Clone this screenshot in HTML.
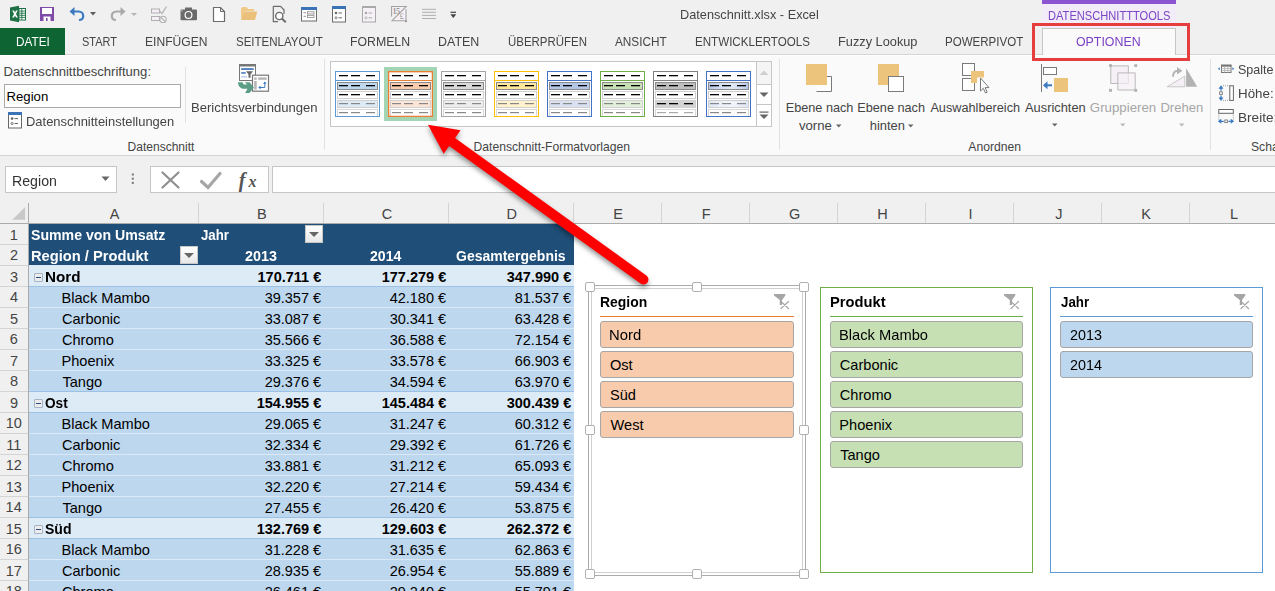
<!DOCTYPE html>
<html><head><meta charset="utf-8"><style>
html,body{margin:0;padding:0;width:1275px;height:591px;overflow:hidden;background:#fff;}
body{position:relative;font-family:"Liberation Sans",sans-serif;}
body>div,body>svg{position:absolute;}
.t{white-space:nowrap;}
</style></head><body>
<div style="left:0px;top:0px;width:1275px;height:55px;background:#f0f0f0"></div>
<div style="left:0px;top:54px;width:1275px;height:1px;background:#d5d5d5"></div>
<div style="left:1042px;top:0px;width:134px;height:4px;background:#8c54d0"></div>
<div style="left:1042px;top:4px;width:134px;height:24px;background:#f1ecf7"></div>
<div class="t" style="left:1047.71px;top:10px;font-size:12.6px;line-height:12.6px;color:#7c44c6;font-weight:normal;transform:scaleX(0.8823);transform-origin:0 0;">DATENSCHNITTTOOLS</div>
<div class="t" style="left:679.98px;top:8px;font-size:13.3px;line-height:13.3px;color:#444;font-weight:normal;transform:scaleX(0.9582);transform-origin:0 0;">Datenschnitt.xlsx - Excel</div>
<div style="left:0px;top:28px;width:65px;height:27px;background:#0f6434"></div>
<div class="t" style="left:15.66px;top:36px;font-size:12.8px;line-height:12.8px;color:#fff;font-weight:normal;transform:scaleX(0.9192);transform-origin:0 0;">DATEI</div>
<div class="t" style="left:81.56px;top:36px;font-size:12.8px;line-height:12.8px;color:#444;font-weight:normal;transform:scaleX(0.8551);transform-origin:0 0;">START</div>
<div class="t" style="left:145.03px;top:36px;font-size:12.8px;line-height:12.8px;color:#444;font-weight:normal;transform:scaleX(0.9441);transform-origin:0 0;">EINFÜGEN</div>
<div class="t" style="left:235.54px;top:36px;font-size:12.8px;line-height:12.8px;color:#444;font-weight:normal;transform:scaleX(0.8985);transform-origin:0 0;">SEITENLAYOUT</div>
<div class="t" style="left:350.42px;top:36px;font-size:12.8px;line-height:12.8px;color:#444;font-weight:normal;transform:scaleX(0.9599);transform-origin:0 0;">FORMELN</div>
<div class="t" style="left:438.30px;top:36px;font-size:12.8px;line-height:12.8px;color:#444;font-weight:normal;transform:scaleX(0.9732);transform-origin:0 0;">DATEN</div>
<div class="t" style="left:507.50px;top:36px;font-size:12.8px;line-height:12.8px;color:#444;font-weight:normal;transform:scaleX(0.8950);transform-origin:0 0;">ÜBERPRÜFEN</div>
<div class="t" style="left:615.00px;top:36px;font-size:12.8px;line-height:12.8px;color:#444;font-weight:normal;transform:scaleX(0.9210);transform-origin:0 0;">ANSICHT</div>
<div class="t" style="left:695.07px;top:36px;font-size:12.8px;line-height:12.8px;color:#444;font-weight:normal;transform:scaleX(0.9063);transform-origin:0 0;">ENTWICKLERTOOLS</div>
<div class="t" style="left:945.48px;top:36px;font-size:12.8px;line-height:12.8px;color:#444;font-weight:normal;transform:scaleX(0.9021);transform-origin:0 0;">POWERPIVOT</div>
<div class="t" style="left:837.98px;top:35px;font-size:13.3px;line-height:13.3px;color:#444;font-weight:normal;transform:scaleX(0.9599);transform-origin:0 0;">Fuzzy Lookup</div>
<div style="left:1042px;top:28px;width:134px;height:27px;background:#fafafa;border:1px solid #c6c6c6;border-bottom:none;box-sizing:border-box"></div>
<div class="t" style="left:1076.01px;top:36px;font-size:12.8px;line-height:12.8px;color:#7a3fc4;font-weight:normal;transform:scaleX(0.9662);transform-origin:0 0;">OPTIONEN</div>
<div style="left:1032px;top:23px;width:158px;height:38px;border:3px solid #e63e3e;box-sizing:border-box;z-index:5"></div>
<div style="left:0px;top:55px;width:1275px;height:100px;background:#fafafa"></div>
<div style="left:0px;top:55px;width:1275px;height:1px;background:#ffffff"></div>
<div style="left:0px;top:155px;width:1275px;height:1px;background:#d5d5d5"></div>
<div style="left:185px;top:67px;width:1px;height:56px;background:#e1e1e1"></div>
<div style="left:324px;top:59px;width:1px;height:91px;background:#e1e1e1"></div>
<div style="left:779px;top:59px;width:1px;height:91px;background:#e1e1e1"></div>
<div style="left:1210px;top:59px;width:1px;height:91px;background:#e1e1e1"></div>
<div class="t" style="left:3.45px;top:65px;font-size:13.09px;line-height:13.09px;color:#444;font-weight:normal;">Datenschnittbeschriftung:</div>
<div style="left:4px;top:84px;width:177px;height:24px;background:#fff;border:1px solid #ababab;box-sizing:border-box"></div>
<div class="t" style="left:6.44px;top:90px;font-size:13.19px;line-height:13.19px;color:#000;font-weight:normal;">Region</div>
<div class="t" style="left:26.26px;top:116px;font-size:12.96px;line-height:12.96px;color:#444;font-weight:normal;transform:scaleX(0.9989);transform-origin:0 0;">Datenschnitteinstellungen</div>
<div class="t" style="left:191.15px;top:101px;font-size:13.11px;line-height:13.11px;color:#444;font-weight:normal;transform:scaleX(0.9982);transform-origin:0 0;">Berichtsverbindungen</div>
<div class="t" style="left:127.54px;top:141px;font-size:12.04px;line-height:12.04px;color:#444;font-weight:normal;">Datenschnitt</div>
<div class="t" style="left:473.52px;top:141px;font-size:12.15px;line-height:12.15px;color:#444;font-weight:normal;">Datenschnitt-Formatvorlagen</div>
<div class="t" style="left:968.29px;top:141px;font-size:12.15px;line-height:12.15px;color:#444;font-weight:normal;">Anordnen</div>
<div class="t" style="left:1251.01px;top:141px;font-size:12.15px;line-height:12.15px;color:#444;font-weight:normal;">Scha</div>
<div class="t" style="left:785.68px;top:102px;font-size:12.69px;line-height:12.69px;color:#444;font-weight:normal;">Ebene nach</div>
<div class="t" style="left:798.95px;top:119px;font-size:13.18px;line-height:13.18px;color:#444;font-weight:normal;">vorne</div>
<div class="t" style="left:857.28px;top:102px;font-size:12.69px;line-height:12.69px;color:#444;font-weight:normal;">Ebene nach</div>
<div class="t" style="left:869.77px;top:120px;font-size:12.92px;line-height:12.92px;color:#444;font-weight:normal;">hinten</div>
<div class="t" style="left:930.39px;top:102px;font-size:12.71px;line-height:12.71px;color:#444;font-weight:normal;">Auswahlbereich</div>
<div class="t" style="left:1025.01px;top:102px;font-size:12.85px;line-height:12.85px;color:#444;font-weight:normal;">Ausrichten</div>
<div class="t" style="left:1089.85px;top:101px;font-size:13.27px;line-height:13.27px;color:#a6a6a6;font-weight:normal;">Gruppieren</div>
<div class="t" style="left:1160.46px;top:101px;font-size:13.04px;line-height:13.04px;color:#a6a6a6;font-weight:normal;">Drehen</div>
<div class="t" style="left:1237.80px;top:63px;font-size:13.2px;line-height:13.2px;color:#444;font-weight:normal;transform:scaleX(0.9500);transform-origin:0 0;">Spalte</div>
<div class="t" style="left:1237.93px;top:87px;font-size:13.2px;line-height:13.2px;color:#444;font-weight:normal;transform:scaleX(1.0119);transform-origin:0 0;">Höhe:</div>
<div class="t" style="left:1237.91px;top:111px;font-size:13.2px;line-height:13.2px;color:#444;font-weight:normal;transform:scaleX(1.0297);transform-origin:0 0;">Breite:</div>
<div style="left:0px;top:156px;width:1275px;height:47px;background:#f0f0f0"></div>
<div style="left:5px;top:166px;width:112px;height:27px;background:#fff;border:1px solid #c6c6c6;box-sizing:border-box"></div>
<div class="t" style="left:11.57px;top:174px;font-size:14.2px;line-height:14.2px;color:#333;font-weight:normal;transform:scaleX(0.9985);transform-origin:0 0;">Region</div>
<div style="left:150px;top:166px;width:119px;height:27px;background:#fff;border:1px solid #c6c6c6;box-sizing:border-box"></div>
<div style="left:272px;top:166px;width:1010px;height:27px;background:#fff;border:1px solid #c6c6c6;box-sizing:border-box"></div>
<div style="left:0px;top:203px;width:1275px;height:21px;background:#f0f0f0"></div>
<div style="left:0px;top:223px;width:1275px;height:1px;background:#ababab"></div>
<div style="left:198px;top:203px;width:1px;height:20px;background:#d4d4d4"></div>
<div class="t" style="left:109.64px;top:207px;font-size:14.5px;line-height:14.5px;color:#444;font-weight:normal;">A</div>
<div style="left:323px;top:203px;width:1px;height:20px;background:#d4d4d4"></div>
<div class="t" style="left:256.93px;top:207px;font-size:14.5px;line-height:14.5px;color:#444;font-weight:normal;">B</div>
<div style="left:448px;top:203px;width:1px;height:20px;background:#d4d4d4"></div>
<div class="t" style="left:381.63px;top:207px;font-size:14.5px;line-height:14.5px;color:#444;font-weight:normal;">C</div>
<div style="left:573px;top:203px;width:1px;height:20px;background:#d4d4d4"></div>
<div class="t" style="left:506.49px;top:207px;font-size:14.5px;line-height:14.5px;color:#444;font-weight:normal;">D</div>
<div style="left:661px;top:203px;width:1px;height:20px;background:#d4d4d4"></div>
<div class="t" style="left:613.35px;top:207px;font-size:14.5px;line-height:14.5px;color:#444;font-weight:normal;">E</div>
<div style="left:749px;top:203px;width:1px;height:20px;background:#d4d4d4"></div>
<div class="t" style="left:701.72px;top:207px;font-size:14.5px;line-height:14.5px;color:#444;font-weight:normal;">F</div>
<div style="left:837px;top:203px;width:1px;height:20px;background:#d4d4d4"></div>
<div class="t" style="left:788.99px;top:207px;font-size:14.5px;line-height:14.5px;color:#444;font-weight:normal;">G</div>
<div style="left:925px;top:203px;width:1px;height:20px;background:#d4d4d4"></div>
<div class="t" style="left:877.21px;top:207px;font-size:14.5px;line-height:14.5px;color:#444;font-weight:normal;">H</div>
<div style="left:1013px;top:203px;width:1px;height:20px;background:#d4d4d4"></div>
<div class="t" style="left:968.47px;top:207px;font-size:14.5px;line-height:14.5px;color:#444;font-weight:normal;">I</div>
<div style="left:1101px;top:203px;width:1px;height:20px;background:#d4d4d4"></div>
<div class="t" style="left:1055.31px;top:207px;font-size:14.5px;line-height:14.5px;color:#444;font-weight:normal;">J</div>
<div style="left:1189px;top:203px;width:1px;height:20px;background:#d4d4d4"></div>
<div class="t" style="left:1141.13px;top:207px;font-size:14.5px;line-height:14.5px;color:#444;font-weight:normal;">K</div>
<div style="left:1277px;top:203px;width:1px;height:20px;background:#d4d4d4"></div>
<div class="t" style="left:1230.08px;top:207px;font-size:14.5px;line-height:14.5px;color:#444;font-weight:normal;">L</div>
<svg style="left:12px;top:207px;" width="14" height="13" viewBox="0 0 14 13"><path d="M0.4 12.8H13.1V0.1Z" fill="#c8c8c8"/></svg>
<div style="left:29px;top:224px;width:1246px;height:367px;background:#fff"></div>
<div style="left:0px;top:224px;width:28px;height:367px;background:#f0f0f0"></div>
<div style="left:28px;top:203px;width:1px;height:388px;background:#ababab"></div>
<div style="left:0px;top:244px;width:28px;height:1px;background:#d4d4d4"></div>
<div class="t" style="left:9.79px;top:228px;font-size:14.5px;line-height:14.5px;color:#444;font-weight:normal;">1</div>
<div style="left:0px;top:265px;width:28px;height:1px;background:#d4d4d4"></div>
<div class="t" style="left:9.94px;top:248px;font-size:14.5px;line-height:14.5px;color:#444;font-weight:normal;">2</div>
<div style="left:0px;top:286px;width:28px;height:1px;background:#d4d4d4"></div>
<div class="t" style="left:10.01px;top:270px;font-size:14.5px;line-height:14.5px;color:#444;font-weight:normal;">3</div>
<div style="left:0px;top:307px;width:28px;height:1px;background:#d4d4d4"></div>
<div class="t" style="left:10.01px;top:290px;font-size:14.5px;line-height:14.5px;color:#444;font-weight:normal;">4</div>
<div style="left:0px;top:328px;width:28px;height:1px;background:#d4d4d4"></div>
<div class="t" style="left:9.94px;top:312px;font-size:14.5px;line-height:14.5px;color:#444;font-weight:normal;">5</div>
<div style="left:0px;top:349px;width:28px;height:1px;background:#d4d4d4"></div>
<div class="t" style="left:9.87px;top:332px;font-size:14.5px;line-height:14.5px;color:#444;font-weight:normal;">6</div>
<div style="left:0px;top:370px;width:28px;height:1px;background:#d4d4d4"></div>
<div class="t" style="left:9.94px;top:354px;font-size:14.5px;line-height:14.5px;color:#444;font-weight:normal;">7</div>
<div style="left:0px;top:391px;width:28px;height:1px;background:#d4d4d4"></div>
<div class="t" style="left:9.94px;top:374px;font-size:14.5px;line-height:14.5px;color:#444;font-weight:normal;">8</div>
<div style="left:0px;top:412px;width:28px;height:1px;background:#d4d4d4"></div>
<div class="t" style="left:10.01px;top:396px;font-size:14.5px;line-height:14.5px;color:#444;font-weight:normal;">9</div>
<div style="left:0px;top:433px;width:28px;height:1px;background:#d4d4d4"></div>
<div class="t" style="left:5.69px;top:416px;font-size:14.5px;line-height:14.5px;color:#444;font-weight:normal;">10</div>
<div style="left:0px;top:454px;width:28px;height:1px;background:#d4d4d4"></div>
<div class="t" style="left:6.30px;top:438px;font-size:14.5px;line-height:14.5px;color:#444;font-weight:normal;">11</div>
<div style="left:0px;top:475px;width:28px;height:1px;background:#d4d4d4"></div>
<div class="t" style="left:5.76px;top:458px;font-size:14.5px;line-height:14.5px;color:#444;font-weight:normal;">12</div>
<div style="left:0px;top:496px;width:28px;height:1px;background:#d4d4d4"></div>
<div class="t" style="left:5.69px;top:480px;font-size:14.5px;line-height:14.5px;color:#444;font-weight:normal;">13</div>
<div style="left:0px;top:517px;width:28px;height:1px;background:#d4d4d4"></div>
<div class="t" style="left:5.62px;top:500px;font-size:14.5px;line-height:14.5px;color:#444;font-weight:normal;">14</div>
<div style="left:0px;top:538px;width:28px;height:1px;background:#d4d4d4"></div>
<div class="t" style="left:5.69px;top:522px;font-size:14.5px;line-height:14.5px;color:#444;font-weight:normal;">15</div>
<div style="left:0px;top:559px;width:28px;height:1px;background:#d4d4d4"></div>
<div class="t" style="left:5.69px;top:542px;font-size:14.5px;line-height:14.5px;color:#444;font-weight:normal;">16</div>
<div style="left:0px;top:580px;width:28px;height:1px;background:#d4d4d4"></div>
<div class="t" style="left:5.76px;top:564px;font-size:14.5px;line-height:14.5px;color:#444;font-weight:normal;">17</div>
<div class="t" style="left:5.69px;top:584px;font-size:14.5px;line-height:14.5px;color:#444;font-weight:normal;">18</div>
<div style="left:29px;top:224px;width:545px;height:41px;background:#1f4e78"></div>
<div style="left:29px;top:265px;width:545px;height:21px;background:#ddebf7"></div>
<div style="left:29px;top:265px;width:545px;height:1px;background:#dbe8f5"></div>
<div style="left:34px;top:273px;width:9px;height:9px;background:#ececec;border:1px solid #a5b3c7;box-sizing:border-box;border-radius:1px"></div>
<div style="left:36px;top:277px;width:5px;height:1px;background:#2b4a80"></div>
<div class="t" style="left:44.59px;top:270px;font-size:14.13px;line-height:14.13px;color:#000;font-weight:bold;transform:scaleX(1.0781);transform-origin:0 0;">Nord</div>
<div class="t" style="left:257.53px;top:270px;font-size:14.5px;line-height:14.5px;color:#000;font-weight:bold;">170.711 €</div>
<div class="t" style="left:381.73px;top:270px;font-size:14.5px;line-height:14.5px;color:#000;font-weight:bold;">177.279 €</div>
<div class="t" style="left:506.73px;top:270px;font-size:14.5px;line-height:14.5px;color:#000;font-weight:bold;">347.990 €</div>
<div style="left:29px;top:286px;width:545px;height:21px;background:#bdd7ee"></div>
<div style="left:29px;top:286px;width:545px;height:1px;background:#9bc2e6"></div>
<div class="t" style="left:61.53px;top:291px;font-size:14.6px;line-height:14.6px;color:#000;font-weight:normal;">Black Mambo</div>
<div class="t" style="left:264.65px;top:291px;font-size:14.5px;line-height:14.5px;color:#000;font-weight:normal;">39.357 €</div>
<div class="t" style="left:389.65px;top:291px;font-size:14.5px;line-height:14.5px;color:#000;font-weight:normal;">42.180 €</div>
<div class="t" style="left:514.65px;top:291px;font-size:14.5px;line-height:14.5px;color:#000;font-weight:normal;">81.537 €</div>
<div style="left:29px;top:307px;width:545px;height:21px;background:#bdd7ee"></div>
<div style="left:29px;top:307px;width:545px;height:1px;background:#dbe8f5"></div>
<div class="t" style="left:61.97px;top:312px;font-size:14.6px;line-height:14.6px;color:#000;font-weight:normal;">Carbonic</div>
<div class="t" style="left:264.65px;top:312px;font-size:14.5px;line-height:14.5px;color:#000;font-weight:normal;">33.087 €</div>
<div class="t" style="left:389.65px;top:312px;font-size:14.5px;line-height:14.5px;color:#000;font-weight:normal;">30.341 €</div>
<div class="t" style="left:514.65px;top:312px;font-size:14.5px;line-height:14.5px;color:#000;font-weight:normal;">63.428 €</div>
<div style="left:29px;top:328px;width:545px;height:21px;background:#bdd7ee"></div>
<div style="left:29px;top:328px;width:545px;height:1px;background:#dbe8f5"></div>
<div class="t" style="left:61.97px;top:333px;font-size:14.6px;line-height:14.6px;color:#000;font-weight:normal;">Chromo</div>
<div class="t" style="left:264.65px;top:333px;font-size:14.5px;line-height:14.5px;color:#000;font-weight:normal;">35.566 €</div>
<div class="t" style="left:389.65px;top:333px;font-size:14.5px;line-height:14.5px;color:#000;font-weight:normal;">36.588 €</div>
<div class="t" style="left:514.65px;top:333px;font-size:14.5px;line-height:14.5px;color:#000;font-weight:normal;">72.154 €</div>
<div style="left:29px;top:349px;width:545px;height:21px;background:#bdd7ee"></div>
<div style="left:29px;top:349px;width:545px;height:1px;background:#dbe8f5"></div>
<div class="t" style="left:61.53px;top:354px;font-size:14.6px;line-height:14.6px;color:#000;font-weight:normal;">Phoenix</div>
<div class="t" style="left:264.65px;top:354px;font-size:14.5px;line-height:14.5px;color:#000;font-weight:normal;">33.325 €</div>
<div class="t" style="left:389.65px;top:354px;font-size:14.5px;line-height:14.5px;color:#000;font-weight:normal;">33.578 €</div>
<div class="t" style="left:514.65px;top:354px;font-size:14.5px;line-height:14.5px;color:#000;font-weight:normal;">66.903 €</div>
<div style="left:29px;top:370px;width:545px;height:21px;background:#bdd7ee"></div>
<div style="left:29px;top:370px;width:545px;height:1px;background:#dbe8f5"></div>
<div class="t" style="left:62.41px;top:375px;font-size:14.6px;line-height:14.6px;color:#000;font-weight:normal;">Tango</div>
<div class="t" style="left:264.65px;top:375px;font-size:14.5px;line-height:14.5px;color:#000;font-weight:normal;">29.376 €</div>
<div class="t" style="left:389.65px;top:375px;font-size:14.5px;line-height:14.5px;color:#000;font-weight:normal;">34.594 €</div>
<div class="t" style="left:514.65px;top:375px;font-size:14.5px;line-height:14.5px;color:#000;font-weight:normal;">63.970 €</div>
<div style="left:29px;top:391px;width:545px;height:21px;background:#ddebf7"></div>
<div style="left:29px;top:391px;width:545px;height:1px;background:#9bc2e6"></div>
<div style="left:34px;top:399px;width:9px;height:9px;background:#ececec;border:1px solid #a5b3c7;box-sizing:border-box;border-radius:1px"></div>
<div style="left:36px;top:403px;width:5px;height:1px;background:#2b4a80"></div>
<div class="t" style="left:44.96px;top:396px;font-size:14.13px;line-height:14.13px;color:#000;font-weight:bold;transform:scaleX(0.9631);transform-origin:0 0;">Ost</div>
<div class="t" style="left:256.73px;top:396px;font-size:14.5px;line-height:14.5px;color:#000;font-weight:bold;">154.955 €</div>
<div class="t" style="left:381.73px;top:396px;font-size:14.5px;line-height:14.5px;color:#000;font-weight:bold;">145.484 €</div>
<div class="t" style="left:506.73px;top:396px;font-size:14.5px;line-height:14.5px;color:#000;font-weight:bold;">300.439 €</div>
<div style="left:29px;top:412px;width:545px;height:21px;background:#bdd7ee"></div>
<div style="left:29px;top:412px;width:545px;height:1px;background:#9bc2e6"></div>
<div class="t" style="left:61.53px;top:417px;font-size:14.6px;line-height:14.6px;color:#000;font-weight:normal;">Black Mambo</div>
<div class="t" style="left:264.65px;top:417px;font-size:14.5px;line-height:14.5px;color:#000;font-weight:normal;">29.065 €</div>
<div class="t" style="left:389.65px;top:417px;font-size:14.5px;line-height:14.5px;color:#000;font-weight:normal;">31.247 €</div>
<div class="t" style="left:514.65px;top:417px;font-size:14.5px;line-height:14.5px;color:#000;font-weight:normal;">60.312 €</div>
<div style="left:29px;top:433px;width:545px;height:21px;background:#bdd7ee"></div>
<div style="left:29px;top:433px;width:545px;height:1px;background:#dbe8f5"></div>
<div class="t" style="left:61.97px;top:438px;font-size:14.6px;line-height:14.6px;color:#000;font-weight:normal;">Carbonic</div>
<div class="t" style="left:264.65px;top:438px;font-size:14.5px;line-height:14.5px;color:#000;font-weight:normal;">32.334 €</div>
<div class="t" style="left:389.65px;top:438px;font-size:14.5px;line-height:14.5px;color:#000;font-weight:normal;">29.392 €</div>
<div class="t" style="left:514.65px;top:438px;font-size:14.5px;line-height:14.5px;color:#000;font-weight:normal;">61.726 €</div>
<div style="left:29px;top:454px;width:545px;height:21px;background:#bdd7ee"></div>
<div style="left:29px;top:454px;width:545px;height:1px;background:#dbe8f5"></div>
<div class="t" style="left:61.97px;top:459px;font-size:14.6px;line-height:14.6px;color:#000;font-weight:normal;">Chromo</div>
<div class="t" style="left:264.65px;top:459px;font-size:14.5px;line-height:14.5px;color:#000;font-weight:normal;">33.881 €</div>
<div class="t" style="left:389.65px;top:459px;font-size:14.5px;line-height:14.5px;color:#000;font-weight:normal;">31.212 €</div>
<div class="t" style="left:514.65px;top:459px;font-size:14.5px;line-height:14.5px;color:#000;font-weight:normal;">65.093 €</div>
<div style="left:29px;top:475px;width:545px;height:21px;background:#bdd7ee"></div>
<div style="left:29px;top:475px;width:545px;height:1px;background:#dbe8f5"></div>
<div class="t" style="left:61.53px;top:480px;font-size:14.6px;line-height:14.6px;color:#000;font-weight:normal;">Phoenix</div>
<div class="t" style="left:264.65px;top:480px;font-size:14.5px;line-height:14.5px;color:#000;font-weight:normal;">32.220 €</div>
<div class="t" style="left:389.65px;top:480px;font-size:14.5px;line-height:14.5px;color:#000;font-weight:normal;">27.214 €</div>
<div class="t" style="left:514.65px;top:480px;font-size:14.5px;line-height:14.5px;color:#000;font-weight:normal;">59.434 €</div>
<div style="left:29px;top:496px;width:545px;height:21px;background:#bdd7ee"></div>
<div style="left:29px;top:496px;width:545px;height:1px;background:#dbe8f5"></div>
<div class="t" style="left:62.41px;top:501px;font-size:14.6px;line-height:14.6px;color:#000;font-weight:normal;">Tango</div>
<div class="t" style="left:264.65px;top:501px;font-size:14.5px;line-height:14.5px;color:#000;font-weight:normal;">27.455 €</div>
<div class="t" style="left:389.65px;top:501px;font-size:14.5px;line-height:14.5px;color:#000;font-weight:normal;">26.420 €</div>
<div class="t" style="left:514.65px;top:501px;font-size:14.5px;line-height:14.5px;color:#000;font-weight:normal;">53.875 €</div>
<div style="left:29px;top:517px;width:545px;height:21px;background:#ddebf7"></div>
<div style="left:29px;top:517px;width:545px;height:1px;background:#9bc2e6"></div>
<div style="left:34px;top:525px;width:9px;height:9px;background:#ececec;border:1px solid #a5b3c7;box-sizing:border-box;border-radius:1px"></div>
<div style="left:36px;top:529px;width:5px;height:1px;background:#2b4a80"></div>
<div class="t" style="left:45.22px;top:522px;font-size:14.13px;line-height:14.13px;color:#000;font-weight:bold;transform:scaleX(0.9943);transform-origin:0 0;">Süd</div>
<div class="t" style="left:256.73px;top:522px;font-size:14.5px;line-height:14.5px;color:#000;font-weight:bold;">132.769 €</div>
<div class="t" style="left:381.73px;top:522px;font-size:14.5px;line-height:14.5px;color:#000;font-weight:bold;">129.603 €</div>
<div class="t" style="left:506.73px;top:522px;font-size:14.5px;line-height:14.5px;color:#000;font-weight:bold;">262.372 €</div>
<div style="left:29px;top:538px;width:545px;height:21px;background:#bdd7ee"></div>
<div style="left:29px;top:538px;width:545px;height:1px;background:#9bc2e6"></div>
<div class="t" style="left:61.53px;top:543px;font-size:14.6px;line-height:14.6px;color:#000;font-weight:normal;">Black Mambo</div>
<div class="t" style="left:264.65px;top:543px;font-size:14.5px;line-height:14.5px;color:#000;font-weight:normal;">31.228 €</div>
<div class="t" style="left:389.65px;top:543px;font-size:14.5px;line-height:14.5px;color:#000;font-weight:normal;">31.635 €</div>
<div class="t" style="left:514.65px;top:543px;font-size:14.5px;line-height:14.5px;color:#000;font-weight:normal;">62.863 €</div>
<div style="left:29px;top:559px;width:545px;height:21px;background:#bdd7ee"></div>
<div style="left:29px;top:559px;width:545px;height:1px;background:#dbe8f5"></div>
<div class="t" style="left:61.97px;top:564px;font-size:14.6px;line-height:14.6px;color:#000;font-weight:normal;">Carbonic</div>
<div class="t" style="left:264.65px;top:564px;font-size:14.5px;line-height:14.5px;color:#000;font-weight:normal;">28.935 €</div>
<div class="t" style="left:389.65px;top:564px;font-size:14.5px;line-height:14.5px;color:#000;font-weight:normal;">26.954 €</div>
<div class="t" style="left:514.65px;top:564px;font-size:14.5px;line-height:14.5px;color:#000;font-weight:normal;">55.889 €</div>
<div style="left:29px;top:580px;width:545px;height:21px;background:#bdd7ee"></div>
<div style="left:29px;top:580px;width:545px;height:1px;background:#dbe8f5"></div>
<div class="t" style="left:61.97px;top:585px;font-size:14.6px;line-height:14.6px;color:#000;font-weight:normal;">Chromo</div>
<div class="t" style="left:264.65px;top:585px;font-size:14.5px;line-height:14.5px;color:#000;font-weight:normal;">26.461 €</div>
<div class="t" style="left:389.65px;top:585px;font-size:14.5px;line-height:14.5px;color:#000;font-weight:normal;">29.240 €</div>
<div class="t" style="left:514.65px;top:585px;font-size:14.5px;line-height:14.5px;color:#000;font-weight:normal;">55.791 €</div>
<div class="t" style="left:31.12px;top:228px;font-size:14.13px;line-height:14.13px;color:#fff;font-weight:bold;transform:scaleX(1.0003);transform-origin:0 0;">Summe von Umsatz</div>
<div class="t" style="left:200.57px;top:228px;font-size:14.13px;line-height:14.13px;color:#fff;font-weight:bold;transform:scaleX(0.9366);transform-origin:0 0;">Jahr</div>
<div class="t" style="left:30.52px;top:249px;font-size:14.13px;line-height:14.13px;color:#fff;font-weight:bold;transform:scaleX(1.0397);transform-origin:0 0;">Region / Produkt</div>
<div class="t" style="left:245.27px;top:249px;font-size:14.13px;line-height:14.13px;color:#fff;font-weight:bold;transform:scaleX(1.0164);transform-origin:0 0;">2013</div>
<div class="t" style="left:370.28px;top:249px;font-size:14.13px;line-height:14.13px;color:#fff;font-weight:bold;transform:scaleX(0.9979);transform-origin:0 0;">2014</div>
<div class="t" style="left:456.44px;top:249px;font-size:14.13px;line-height:14.13px;color:#fff;font-weight:bold;transform:scaleX(0.9904);transform-origin:0 0;">Gesamtergebnis</div>
<div style="left:305px;top:225px;width:18px;height:18px;background:linear-gradient(#ffffff,#e8e8e8);border:1px solid #c8c8c8;box-sizing:border-box"></div>
<svg style="left:309px;top:232px;" width="10" height="5" viewBox="0 0 10 5"><path d="M0 0H10L5 5Z" fill="#666"/></svg>
<div style="left:180px;top:246px;width:18px;height:18px;background:linear-gradient(#ffffff,#e8e8e8);border:1px solid #c8c8c8;box-sizing:border-box"></div>
<svg style="left:184px;top:253px;" width="10" height="5" viewBox="0 0 10 5"><path d="M0 0H10L5 5Z" fill="#666"/></svg>
<div class="t" style="left:599.86px;top:295px;font-size:14.0px;line-height:14.0px;color:#000;font-weight:bold;transform:scaleX(0.9945);transform-origin:0 0;">Region</div>
<div style="left:600px;top:316px;width:194px;height:1px;background:#ed7d31"></div>
<div style="left:600px;top:321px;width:194px;height:27px;background:#f8cbad;border:1px solid #a6a6a6;border-radius:3px;box-sizing:border-box"></div>
<div class="t" style="left:609.31px;top:328px;font-size:14.6px;line-height:14.6px;color:#000;font-weight:normal;transform:scaleX(1.0183);transform-origin:0 0;">Nord</div>
<div style="left:600px;top:351px;width:194px;height:27px;background:#f8cbad;border:1px solid #a6a6a6;border-radius:3px;box-sizing:border-box"></div>
<div class="t" style="left:609.92px;top:358px;font-size:14.6px;line-height:14.6px;color:#000;font-weight:normal;">Ost</div>
<div style="left:600px;top:381px;width:194px;height:27px;background:#f8cbad;border:1px solid #a6a6a6;border-radius:3px;box-sizing:border-box"></div>
<div class="t" style="left:609.92px;top:388px;font-size:14.6px;line-height:14.6px;color:#000;font-weight:normal;">Süd</div>
<div style="left:600px;top:411px;width:194px;height:27px;background:#f8cbad;border:1px solid #a6a6a6;border-radius:3px;box-sizing:border-box"></div>
<div class="t" style="left:610.50px;top:418px;font-size:14.6px;line-height:14.6px;color:#000;font-weight:normal;">West</div>
<div style="left:820px;top:287px;width:213px;height:286px;border:1px solid #70ad47;box-sizing:border-box;background:#fff"></div>
<div class="t" style="left:829.82px;top:295px;font-size:14.0px;line-height:14.0px;color:#000;font-weight:bold;transform:scaleX(1.0498);transform-origin:0 0;">Produkt</div>
<div style="left:830px;top:316px;width:193px;height:1px;background:#70ad47"></div>
<div style="left:830px;top:321px;width:193px;height:27px;background:#c6e0b4;border:1px solid #a6a6a6;border-radius:3px;box-sizing:border-box"></div>
<div class="t" style="left:839.32px;top:328px;font-size:14.6px;line-height:14.6px;color:#000;font-weight:normal;transform:scaleX(1.0064);transform-origin:0 0;">Black Mambo</div>
<div style="left:830px;top:351px;width:193px;height:27px;background:#c6e0b4;border:1px solid #a6a6a6;border-radius:3px;box-sizing:border-box"></div>
<div class="t" style="left:839.77px;top:358px;font-size:14.6px;line-height:14.6px;color:#000;font-weight:normal;">Carbonic</div>
<div style="left:830px;top:381px;width:193px;height:27px;background:#c6e0b4;border:1px solid #a6a6a6;border-radius:3px;box-sizing:border-box"></div>
<div class="t" style="left:839.77px;top:388px;font-size:14.6px;line-height:14.6px;color:#000;font-weight:normal;">Chromo</div>
<div style="left:830px;top:411px;width:193px;height:27px;background:#c6e0b4;border:1px solid #a6a6a6;border-radius:3px;box-sizing:border-box"></div>
<div class="t" style="left:839.33px;top:418px;font-size:14.6px;line-height:14.6px;color:#000;font-weight:normal;">Phoenix</div>
<div style="left:830px;top:441px;width:193px;height:27px;background:#c6e0b4;border:1px solid #a6a6a6;border-radius:3px;box-sizing:border-box"></div>
<div class="t" style="left:840.21px;top:448px;font-size:14.6px;line-height:14.6px;color:#000;font-weight:normal;">Tango</div>
<div style="left:1050px;top:287px;width:213px;height:286px;border:1px solid #5b9bd5;box-sizing:border-box;background:#fff"></div>
<div class="t" style="left:1060.57px;top:295px;font-size:14.0px;line-height:14.0px;color:#000;font-weight:bold;transform:scaleX(0.9487);transform-origin:0 0;">Jahr</div>
<div style="left:1060px;top:316px;width:193px;height:1px;background:#5b9bd5"></div>
<div style="left:1060px;top:321px;width:193px;height:27px;background:#bdd7ee;border:1px solid #a6a6a6;border-radius:3px;box-sizing:border-box"></div>
<div class="t" style="left:1069.78px;top:328px;font-size:14.6px;line-height:14.6px;color:#000;font-weight:normal;transform:scaleX(0.9833);transform-origin:0 0;">2013</div>
<div style="left:1060px;top:351px;width:193px;height:27px;background:#bdd7ee;border:1px solid #a6a6a6;border-radius:3px;box-sizing:border-box"></div>
<div class="t" style="left:1069.78px;top:358px;font-size:14.6px;line-height:14.6px;color:#000;font-weight:normal;transform:scaleX(0.9851);transform-origin:0 0;">2014</div>
<svg style="left:9px;top:5px;" width="18" height="18" viewBox="0 0 18 18"><path d="M1 2.5L10 0.7V17.3L1 15.5Z" fill="#1e7145"/><rect x="9.5" y="3" width="7.5" height="12.5" fill="#1e7145"/><rect x="10.5" y="4" width="5.5" height="10.5" fill="#fff"/><path d="M10.5 6.1H16M10.5 8.2H16M10.5 10.3H16M10.5 12.4H16M12.8 4V14.5" stroke="#1e7145" stroke-width="0.9"/><path d="M3.2 5.4H5.1L6 7.4L7 5.4H8.8L7 8.9L8.9 12.6H7L6 10.5L5 12.6H3.1L5 8.9Z" fill="#fff"/></svg>
<svg style="left:39px;top:6px;" width="16" height="16" viewBox="0 0 16 16"><rect x="1" y="1" width="14" height="14" fill="#7e4ba9"/><rect x="3" y="2" width="10" height="6" fill="#fff"/><rect x="4.5" y="10.5" width="7" height="4.5" fill="#fff"/><rect x="7" y="12" width="1.6" height="3" fill="#7e4ba9"/></svg>
<svg style="left:68px;top:5px;" width="18" height="17" viewBox="0 0 18 17"><path d="M4.5 6.5H10.5C13.5 6.5 15.2 8.6 15.2 11C15.2 13.4 13.4 15 11 15" stroke="#3e7ac1" stroke-width="2.2" fill="none"/><path d="M1.5 6.5L6.5 2V11Z" fill="#3e7ac1"/></svg>
<svg style="left:90px;top:12px;" width="7" height="4" viewBox="0 0 7 4"><path d="M0 0H6L3 3.5Z" fill="#5e5e5e"/></svg>
<svg style="left:109px;top:5px;" width="18" height="17" viewBox="0 0 18 17"><path d="M13.5 6.5H7.5C4.5 6.5 2.8 8.6 2.8 11C2.8 13.4 4.6 15 7 15" stroke="#a9a9a9" stroke-width="2.2" fill="none"/><path d="M16.5 6.5L11.5 2V11Z" fill="#a9a9a9"/></svg>
<svg style="left:131px;top:12px;" width="7" height="4" viewBox="0 0 7 4"><path d="M0 1H6L3 4Z" fill="#b3b3b3"/></svg>
<svg style="left:150px;top:5px;" width="18" height="18" viewBox="0 0 18 18"><rect x="1.5" y="4" width="8" height="4" fill="#f6eef6" stroke="#b0b0b0"/><rect x="1.5" y="11.5" width="8" height="4" fill="#f6eef6" stroke="#b0b0b0"/><path d="M9.5 6L12 8.5L16.5 1.5" stroke="#b0b0b0" stroke-width="1.2" fill="none"/><circle cx="13" cy="14.5" r="3.2" fill="none" stroke="#b0b0b0" stroke-width="1.1"/><path d="M10.8 12.3L15.2 16.7" stroke="#b0b0b0" stroke-width="1.1"/></svg>
<svg style="left:180px;top:7px;" width="18" height="14" viewBox="0 0 18 14"><rect x="0.5" y="2.5" width="16.5" height="10.8" rx="1" fill="#6b6b6b"/><rect x="5" y="0.5" width="7" height="3" fill="#6b6b6b"/><circle cx="8.5" cy="7.9" r="3.4" fill="none" stroke="#fff" stroke-width="1.2"/><circle cx="1.9" cy="3.8" r="0.6" fill="#fff"/></svg>
<svg style="left:212px;top:6px;" width="14" height="17" viewBox="0 0 14 17"><path d="M1.5 1.5H8.5L12.5 5.5V15.5H1.5Z" fill="#fff" stroke="#6b6b6b" stroke-width="1.2"/><path d="M8.5 1.5V5.5H12.5" fill="none" stroke="#6b6b6b" stroke-width="1"/></svg>
<svg style="left:240px;top:6px;" width="18" height="15" viewBox="0 0 18 15"><path d="M1 3.5Q1 1 3 1H6.5L8 3H14V5H4.5L1 13.5Z" fill="#f0c986"/><path d="M4 5.5H17.3L15 14H1Z" fill="#ebc07a"/></svg>
<svg style="left:272px;top:5px;" width="16" height="18" viewBox="0 0 16 18"><path d="M1.3 1.3H8.5L12 4.8V9" fill="none" stroke="#6b6b6b" stroke-width="1.2"/><path d="M1.3 1.3V16.7H6" fill="none" stroke="#6b6b6b" stroke-width="1.2"/><circle cx="7.3" cy="11" r="3.6" fill="#fff" stroke="#6b6b6b" stroke-width="1.4"/><path d="M9.8 13.6L13.8 17.2" stroke="#6b6b6b" stroke-width="2"/></svg>
<svg style="left:300px;top:6px;" width="18" height="16" viewBox="0 0 18 16"><rect x="1.5" y="1.5" width="15" height="13.5" fill="#fff" stroke="#6b6b6b"/><rect x="1" y="1" width="16" height="3" fill="#3c73b6"/><path d="M3.5 6.8H6M3.5 10.3H6" stroke="#888" stroke-width="0.9"/><rect x="7.5" y="5.8" width="6.5" height="2.2" fill="none" stroke="#888" stroke-width="0.8"/><rect x="7.5" y="9.3" width="6.5" height="2.2" fill="none" stroke="#888" stroke-width="0.8"/></svg>
<svg style="left:331px;top:5px;" width="16" height="18" viewBox="0 0 16 18"><rect x="1.5" y="1.5" width="13" height="15.5" fill="#fff" stroke="#6b6b6b"/><rect x="1" y="1" width="14" height="3" fill="#3c73b6"/><circle cx="5" cy="8" r="1.3" fill="#6b6b6b"/><circle cx="5" cy="12.8" r="1.1" fill="none" stroke="#6b6b6b" stroke-width="0.8"/><path d="M7.5 8H11M7.5 12.8H11" stroke="#6b6b6b" stroke-width="1"/></svg>
<svg style="left:361px;top:5px;" width="16" height="18" viewBox="0 0 16 18"><rect x="1.5" y="1.5" width="13" height="15.5" fill="#f6f1f6" stroke="#a9a9a9"/><rect x="1" y="1" width="14" height="2" fill="#a9a9a9"/><circle cx="5" cy="8" r="1.3" fill="#a9a9a9"/><circle cx="5" cy="12.8" r="1.1" fill="none" stroke="#a9a9a9" stroke-width="0.8"/><path d="M7.5 8H11M7.5 12.8H11" stroke="#a9a9a9" stroke-width="1"/></svg>
<svg style="left:390px;top:5px;" width="19" height="19" viewBox="0 0 19 19"><path d="M1.6 11.6V1.5H16.2L2.1 15.7H16V4.3" fill="#f6f1f6" stroke="#a3a3a3" stroke-width="1.1"/><text x="2.6" y="8.9" font-size="8.2" font-family="Liberation Serif" font-weight="bold" fill="#9a9a9a" letter-spacing="-0.6">15</text><text x="9.4" y="13.6" font-size="8.5" font-family="Liberation Serif" fill="#9a9a9a">&#163;</text><rect x="15" y="15.3" width="2" height="1.8" fill="#999"/></svg>
<svg style="left:421px;top:8px;" width="16" height="12" viewBox="0 0 16 12"><path d="M1 1.3H15M1 4.3H15M1 7.4H15M1 10.5H15" stroke="#b0b0b0" stroke-width="1"/></svg>
<svg style="left:450px;top:11px;" width="7" height="8" viewBox="0 0 7 8"><rect x="0.5" y="0.7" width="5.5" height="1.2" fill="#444"/><path d="M0.3 3.3H6.3L3.3 7Z" fill="#444"/></svg>
<svg style="left:7px;top:111px;" width="16" height="18" viewBox="0 0 16 18"><rect x="1.5" y="1.5" width="13" height="15.5" fill="#fff" stroke="#666"/><rect x="1" y="1" width="14" height="3" fill="#3c73b6"/><circle cx="5.1" cy="7.6" r="1.3" fill="#666"/><circle cx="5.1" cy="12.5" r="1.1" fill="none" stroke="#666" stroke-width="0.9"/><path d="M7.5 7.6H11M7.5 12.5H11" stroke="#666" stroke-width="1"/></svg>
<svg style="left:232px;top:60px;" width="40" height="36" viewBox="0 0 40 36"><rect x="7.5" y="4.5" width="16" height="16" fill="#fff" stroke="#777"/><rect x="7" y="4" width="17" height="2.5" fill="#777"/><rect x="9.2" y="8.2" width="12.5" height="1.7" fill="#3c73b6"/><rect x="9.2" y="12.2" width="4.5" height="1.5" fill="#3c73b6"/><rect x="9.2" y="16.1" width="5.7" height="1.5" fill="#bcd3ee"/><path d="M14 11.3H21L18.5 14.5V17.7H16.5V14.5Z" fill="#666"/><rect x="20.5" y="15.2" width="16" height="16" fill="#fff" stroke="#777" stroke-width="1.2"/><rect x="22.2" y="17.4" width="2.5" height="2.4" fill="#b5b5b5"/><rect x="26.2" y="17.4" width="8.5" height="2.4" fill="#b5b5b5"/><rect x="22.2" y="21" width="2.5" height="8.6" fill="#b5b5b5"/><path d="M27 27.5H32.8V22.5" fill="none" stroke="#3c7ac0" stroke-width="1"/><path d="M26.3 27.5L28.5 25.6V29.4Z" fill="#3c7ac0"/><path d="M32.8 21.5L31 23.7H34.6Z" fill="#3c7ac0"/><path d="M6 22.2H10.7C10.7 23.8 11.5 24.5 13 24.5H15L13.1 22.2H17.5L21.9 27.4L17.5 32.9H13.1L15.5 28.8H12.5C8.5 28.8 6 26.2 6 22.2Z" fill="#5b9e85"/></svg>
<svg style="left:804px;top:62px;" width="30" height="32" viewBox="0 0 30 32"><path d="M12.5 14.5H27.5V29.5H12.5" fill="#fff" stroke="#7a7a7a"/><rect x="2" y="2" width="21" height="21" fill="#ecc47c"/></svg>
<svg style="left:876px;top:62px;" width="30" height="32" viewBox="0 0 30 32"><rect x="2" y="2" width="21" height="21" fill="#ecc47c"/><rect x="12.5" y="14.5" width="15" height="15" fill="#fff" stroke="#7a7a7a"/></svg>
<svg style="left:836px;top:124px;" width="6" height="4" viewBox="0 0 6 4"><path d="M0 0.5H5.5L2.75 3.5Z" fill="#666"/></svg>
<svg style="left:908px;top:124px;" width="6" height="4" viewBox="0 0 6 4"><path d="M0 0.5H5.5L2.75 3.5Z" fill="#666"/></svg>
<svg style="left:1052px;top:123px;" width="6" height="4" viewBox="0 0 6 4"><path d="M0 0.5H5.5L2.75 3.5Z" fill="#666"/></svg>
<svg style="left:1120px;top:123px;" width="6" height="4" viewBox="0 0 6 4"><path d="M0 0.5H5.5L2.75 3.5Z" fill="#b8b8b8"/></svg>
<svg style="left:1179px;top:123px;" width="6" height="4" viewBox="0 0 6 4"><path d="M0 0.5H5.5L2.75 3.5Z" fill="#b8b8b8"/></svg>
<svg style="left:960px;top:62px;" width="32" height="32" viewBox="0 0 32 32"><rect x="2.5" y="1.5" width="12" height="12" fill="#fff" stroke="#7a7a7a"/><rect x="2.5" y="16.5" width="12" height="12" fill="#fff" stroke="#7a7a7a"/><path d="M11 9H24V15.5H17V21H11Z" fill="#ecc47c"/><path d="M20.5 16V29L23.3 26.3L25.5 31L27.2 30.2L25.1 25.6H29Z" fill="#fff" stroke="#7a7a7a" stroke-width="1"/></svg>
<svg style="left:1038px;top:62px;" width="32" height="32" viewBox="0 0 32 32"><path d="M3.5 2V30" stroke="#7a7a7a"/><rect x="5.5" y="5.5" width="13" height="7" fill="#fff" stroke="#7a7a7a"/><rect x="16" y="16" width="14" height="14" fill="#ecc47c"/><path d="M6 23.3H14" stroke="#3c7ac0" stroke-width="2"/><path d="M5 23.3L9.5 19.3V27.3Z" fill="#3c7ac0"/></svg>
<svg style="left:1106px;top:62px;" width="34" height="32" viewBox="0 0 34 32"><rect x="4.8" y="3.9" width="17.5" height="17.5" fill="#f5f0f5" stroke="#b3b3b3" stroke-width="0.9"/><path d="M11.8 10.9H29.2V28H11.8Z" fill="#f5f0f5" fill-opacity="0.7" stroke="#b3b3b3" stroke-width="0.9"/><rect x="3" y="2.2" width="3" height="2.8" fill="#b3b3b3"/><rect x="28.2" y="2.2" width="3" height="2.8" fill="#b3b3b3"/><rect x="3" y="26.9" width="3" height="2.9" fill="#b3b3b3"/><rect x="28.2" y="26.9" width="3" height="2.9" fill="#b3b3b3"/></svg>
<svg style="left:1165px;top:62px;" width="34" height="28" viewBox="0 0 34 28"><path d="M2.1 24.8H19.8V14.1Z" fill="#f5f0f5" stroke="#c4c4c4" stroke-width="0.9"/><path d="M21.1 24.8H32.2L21.1 5.9Z" fill="#b3b3b3"/><path d="M8 14.8C8 10.8 9.5 8.8 13 8.8" fill="none" stroke="#b3b3b3" stroke-width="1.9"/><path d="M12 5L17.4 8.8L12 12.6Z" fill="#b3b3b3"/></svg>
<svg style="left:1216px;top:62px;" width="20" height="14" viewBox="0 0 20 14"><rect x="5.5" y="3.2" width="9.5" height="7.3" fill="#fff" stroke="#777"/><rect x="5" y="2.7" width="10.5" height="2" fill="#777"/><path d="M5.5 6.6H15M5.5 8.6H15M8.7 4.7V10.5M11.9 4.7V10.5" stroke="#aaa" stroke-width="0.8"/><path d="M1.8 6.7L3.8 5.2V8.2Z" fill="#3c7ac0"/><path d="M18.2 6.7L16.4 5.2V8.2Z" fill="#3c7ac0"/></svg>
<svg style="left:1216px;top:84px;" width="20" height="20" viewBox="0 0 20 20"><rect x="13.8" y="1.8" width="3.6" height="14.6" fill="#fff" stroke="#666"/><path d="M7 1.8H13.5M7 16.4H13.5" stroke="#666" stroke-width="0.8" stroke-dasharray="0.8 1.2"/><rect x="3.7" y="7.8" width="2.6" height="2.6" fill="#fff" stroke="#777" stroke-width="0.9"/><path d="M5 3.5V6.8M5 11.4V14.8" stroke="#3c7ac0" stroke-width="1.3"/><path d="M2.5 4.7L5 1.3L7.5 4.7Z M2.5 13.5L5 16.9L7.5 13.5Z" fill="#3c7ac0"/></svg>
<svg style="left:1216px;top:108px;" width="20" height="20" viewBox="0 0 20 20"><rect x="2.8" y="1.5" width="14.5" height="3.8" fill="#fff" stroke="#666"/><path d="M2.8 5.5V12M17.3 5.5V12" stroke="#666" stroke-width="0.8" stroke-dasharray="0.8 1.2"/><rect x="8.8" y="12" width="2.6" height="2.6" fill="#fff" stroke="#777" stroke-width="0.9"/><path d="M4 13.3H7.8M12.4 13.3H16" stroke="#3c7ac0" stroke-width="1.3"/><path d="M5.3 10.8L1.8 13.3L5.3 15.8Z M14.7 10.8L18.2 13.3L14.7 15.8Z" fill="#3c7ac0"/></svg>
<div style="left:330px;top:61px;width:442px;height:66px;background:#fff;border:1px solid #c6c6c6;box-sizing:border-box"></div>
<div style="left:756px;top:61px;width:16px;height:66px;border:1px solid #c6c6c6;box-sizing:border-box;background:#fff"></div>
<div style="left:757px;top:62px;width:14px;height:22px;background:#f5f5f5"></div>
<div style="left:756px;top:84px;width:16px;height:1px;background:#c6c6c6"></div>
<div style="left:756px;top:104px;width:16px;height:1px;background:#c6c6c6"></div>
<svg style="left:759px;top:70px;" width="10" height="6" viewBox="0 0 10 6"><path d="M0.5 5H9.5L5 0.5Z" fill="#cfcfcf"/></svg>
<svg style="left:759px;top:92px;" width="10" height="6" viewBox="0 0 10 6"><path d="M0.5 0.5H9.5L5 5Z" fill="#666"/></svg>
<svg style="left:759px;top:110px;" width="10" height="10" viewBox="0 0 10 10"><rect x="0.5" y="1.5" width="9" height="1.2" fill="#666"/><path d="M0.5 4.5H9.5L5 9Z" fill="#666"/></svg>
<div style="left:384px;top:67px;width:53px;height:54px;background:#a3d4b4"></div>
<svg style="left:335px;top:71px;" width="45" height="46" viewBox="0 0 45 46"><rect x="0.5" y="0.5" width="44" height="45" fill="#fff" stroke="#5b9bd5" stroke-width="1"/><path d="M0.5 9.5H44.5" stroke="#5b9bd5"/><rect x="2.5" y="11.5" width="40" height="7" fill="#bdd7ee" stroke="#8c8c8c"/><rect x="4" y="14" width="9" height="1.3" fill="#000"/><rect x="16" y="14" width="9" height="1.3" fill="#000"/><rect x="31" y="14" width="9" height="1.3" fill="#000"/><rect x="2.5" y="20.5" width="40" height="7" fill="#fff" stroke="#d0d0d0"/><rect x="4" y="23" width="9" height="1.3" fill="#000"/><rect x="16" y="23" width="9" height="1.3" fill="#000"/><rect x="31" y="23" width="9" height="1.3" fill="#000"/><rect x="2.5" y="29.5" width="40" height="7" fill="#ddebf7" stroke="#d0d0d0"/><rect x="4" y="32" width="9" height="1.2" fill="#888"/><rect x="16" y="32" width="9" height="1.2" fill="#888"/><rect x="31" y="32" width="9" height="1.2" fill="#888"/><rect x="2.5" y="38.5" width="40" height="7" fill="#fff" stroke="#d8d8d8"/><rect x="4" y="41" width="9" height="1.2" fill="#888"/><rect x="16" y="41" width="9" height="1.2" fill="#888"/><rect x="31" y="41" width="9" height="1.2" fill="#888"/><rect x="4" y="4" width="9" height="1.3" fill="#000"/><rect x="16" y="4" width="9" height="1.3" fill="#000"/><rect x="31" y="4" width="9" height="1.3" fill="#000"/><path d="M0.5 46V0.5H44.5V46" fill="none" stroke="#5b9bd5" stroke-width="1"/><path d="M0 45.5H45" stroke="#5b9bd5" stroke-width="1"/></svg>
<svg style="left:388px;top:71px;" width="45" height="46" viewBox="0 0 45 46"><rect x="0.5" y="0.5" width="44" height="45" fill="#fff" stroke="#ed7d31" stroke-width="1.3"/><path d="M0.5 9.5H44.5" stroke="#ed7d31"/><rect x="2.5" y="11.5" width="40" height="7" fill="#f8cbad" stroke="#8c8c8c"/><rect x="4" y="14" width="9" height="1.3" fill="#000"/><rect x="16" y="14" width="9" height="1.3" fill="#000"/><rect x="31" y="14" width="9" height="1.3" fill="#000"/><rect x="2.5" y="20.5" width="40" height="7" fill="#fff" stroke="#d0d0d0"/><rect x="4" y="23" width="9" height="1.3" fill="#000"/><rect x="16" y="23" width="9" height="1.3" fill="#000"/><rect x="31" y="23" width="9" height="1.3" fill="#000"/><rect x="2.5" y="29.5" width="40" height="7" fill="#fce4d6" stroke="#d0d0d0"/><rect x="4" y="32" width="9" height="1.2" fill="#888"/><rect x="16" y="32" width="9" height="1.2" fill="#888"/><rect x="31" y="32" width="9" height="1.2" fill="#888"/><rect x="2.5" y="38.5" width="40" height="7" fill="#fff" stroke="#d8d8d8"/><rect x="4" y="41" width="9" height="1.2" fill="#888"/><rect x="16" y="41" width="9" height="1.2" fill="#888"/><rect x="31" y="41" width="9" height="1.2" fill="#888"/><rect x="4" y="4" width="9" height="1.3" fill="#000"/><rect x="16" y="4" width="9" height="1.3" fill="#000"/><rect x="31" y="4" width="9" height="1.3" fill="#000"/><path d="M0.5 46V0.5H44.5V46" fill="none" stroke="#ed7d31" stroke-width="1.3"/><path d="M0 45.5H45" stroke="#ed7d31" stroke-width="1.3"/></svg>
<svg style="left:441px;top:71px;" width="45" height="46" viewBox="0 0 45 46"><rect x="0.5" y="0.5" width="44" height="45" fill="#fff" stroke="#a5a5a5" stroke-width="1"/><path d="M0.5 9.5H44.5" stroke="#a5a5a5"/><rect x="2.5" y="11.5" width="40" height="7" fill="#d9d9d9" stroke="#8c8c8c"/><rect x="4" y="14" width="9" height="1.3" fill="#000"/><rect x="16" y="14" width="9" height="1.3" fill="#000"/><rect x="31" y="14" width="9" height="1.3" fill="#000"/><rect x="2.5" y="20.5" width="40" height="7" fill="#fff" stroke="#d0d0d0"/><rect x="4" y="23" width="9" height="1.3" fill="#000"/><rect x="16" y="23" width="9" height="1.3" fill="#000"/><rect x="31" y="23" width="9" height="1.3" fill="#000"/><rect x="2.5" y="29.5" width="40" height="7" fill="#ededed" stroke="#d0d0d0"/><rect x="4" y="32" width="9" height="1.2" fill="#888"/><rect x="16" y="32" width="9" height="1.2" fill="#888"/><rect x="31" y="32" width="9" height="1.2" fill="#888"/><rect x="2.5" y="38.5" width="40" height="7" fill="#fff" stroke="#d8d8d8"/><rect x="4" y="41" width="9" height="1.2" fill="#888"/><rect x="16" y="41" width="9" height="1.2" fill="#888"/><rect x="31" y="41" width="9" height="1.2" fill="#888"/><rect x="4" y="4" width="9" height="1.3" fill="#000"/><rect x="16" y="4" width="9" height="1.3" fill="#000"/><rect x="31" y="4" width="9" height="1.3" fill="#000"/><path d="M0.5 46V0.5H44.5V46" fill="none" stroke="#a5a5a5" stroke-width="1"/><path d="M0 45.5H45" stroke="#a5a5a5" stroke-width="1"/></svg>
<svg style="left:494px;top:71px;" width="45" height="46" viewBox="0 0 45 46"><rect x="0.5" y="0.5" width="44" height="45" fill="#fff" stroke="#ffc000" stroke-width="1"/><path d="M0.5 9.5H44.5" stroke="#ffc000"/><rect x="2.5" y="11.5" width="40" height="7" fill="#ffe699" stroke="#8c8c8c"/><rect x="4" y="14" width="9" height="1.3" fill="#000"/><rect x="16" y="14" width="9" height="1.3" fill="#000"/><rect x="31" y="14" width="9" height="1.3" fill="#000"/><rect x="2.5" y="20.5" width="40" height="7" fill="#fff" stroke="#d0d0d0"/><rect x="4" y="23" width="9" height="1.3" fill="#000"/><rect x="16" y="23" width="9" height="1.3" fill="#000"/><rect x="31" y="23" width="9" height="1.3" fill="#000"/><rect x="2.5" y="29.5" width="40" height="7" fill="#fff2cc" stroke="#d0d0d0"/><rect x="4" y="32" width="9" height="1.2" fill="#888"/><rect x="16" y="32" width="9" height="1.2" fill="#888"/><rect x="31" y="32" width="9" height="1.2" fill="#888"/><rect x="2.5" y="38.5" width="40" height="7" fill="#fff" stroke="#d8d8d8"/><rect x="4" y="41" width="9" height="1.2" fill="#888"/><rect x="16" y="41" width="9" height="1.2" fill="#888"/><rect x="31" y="41" width="9" height="1.2" fill="#888"/><rect x="4" y="4" width="9" height="1.3" fill="#000"/><rect x="16" y="4" width="9" height="1.3" fill="#000"/><rect x="31" y="4" width="9" height="1.3" fill="#000"/><path d="M0.5 46V0.5H44.5V46" fill="none" stroke="#ffc000" stroke-width="1"/><path d="M0 45.5H45" stroke="#ffc000" stroke-width="1"/></svg>
<svg style="left:547px;top:71px;" width="45" height="46" viewBox="0 0 45 46"><rect x="0.5" y="0.5" width="44" height="45" fill="#fff" stroke="#4472c4" stroke-width="1"/><path d="M0.5 9.5H44.5" stroke="#4472c4"/><rect x="2.5" y="11.5" width="40" height="7" fill="#b4c6e7" stroke="#8c8c8c"/><rect x="4" y="14" width="9" height="1.3" fill="#000"/><rect x="16" y="14" width="9" height="1.3" fill="#000"/><rect x="31" y="14" width="9" height="1.3" fill="#000"/><rect x="2.5" y="20.5" width="40" height="7" fill="#fff" stroke="#d0d0d0"/><rect x="4" y="23" width="9" height="1.3" fill="#000"/><rect x="16" y="23" width="9" height="1.3" fill="#000"/><rect x="31" y="23" width="9" height="1.3" fill="#000"/><rect x="2.5" y="29.5" width="40" height="7" fill="#d9e1f2" stroke="#d0d0d0"/><rect x="4" y="32" width="9" height="1.2" fill="#888"/><rect x="16" y="32" width="9" height="1.2" fill="#888"/><rect x="31" y="32" width="9" height="1.2" fill="#888"/><rect x="2.5" y="38.5" width="40" height="7" fill="#fff" stroke="#d8d8d8"/><rect x="4" y="41" width="9" height="1.2" fill="#888"/><rect x="16" y="41" width="9" height="1.2" fill="#888"/><rect x="31" y="41" width="9" height="1.2" fill="#888"/><rect x="4" y="4" width="9" height="1.3" fill="#000"/><rect x="16" y="4" width="9" height="1.3" fill="#000"/><rect x="31" y="4" width="9" height="1.3" fill="#000"/><path d="M0.5 46V0.5H44.5V46" fill="none" stroke="#4472c4" stroke-width="1"/><path d="M0 45.5H45" stroke="#4472c4" stroke-width="1"/></svg>
<svg style="left:600px;top:71px;" width="45" height="46" viewBox="0 0 45 46"><rect x="0.5" y="0.5" width="44" height="45" fill="#fff" stroke="#70ad47" stroke-width="1"/><path d="M0.5 9.5H44.5" stroke="#70ad47"/><rect x="2.5" y="11.5" width="40" height="7" fill="#c6e0b4" stroke="#8c8c8c"/><rect x="4" y="14" width="9" height="1.3" fill="#000"/><rect x="16" y="14" width="9" height="1.3" fill="#000"/><rect x="31" y="14" width="9" height="1.3" fill="#000"/><rect x="2.5" y="20.5" width="40" height="7" fill="#fff" stroke="#d0d0d0"/><rect x="4" y="23" width="9" height="1.3" fill="#000"/><rect x="16" y="23" width="9" height="1.3" fill="#000"/><rect x="31" y="23" width="9" height="1.3" fill="#000"/><rect x="2.5" y="29.5" width="40" height="7" fill="#e2efda" stroke="#d0d0d0"/><rect x="4" y="32" width="9" height="1.2" fill="#888"/><rect x="16" y="32" width="9" height="1.2" fill="#888"/><rect x="31" y="32" width="9" height="1.2" fill="#888"/><rect x="2.5" y="38.5" width="40" height="7" fill="#fff" stroke="#d8d8d8"/><rect x="4" y="41" width="9" height="1.2" fill="#888"/><rect x="16" y="41" width="9" height="1.2" fill="#888"/><rect x="31" y="41" width="9" height="1.2" fill="#888"/><rect x="4" y="4" width="9" height="1.3" fill="#000"/><rect x="16" y="4" width="9" height="1.3" fill="#000"/><rect x="31" y="4" width="9" height="1.3" fill="#000"/><path d="M0.5 46V0.5H44.5V46" fill="none" stroke="#70ad47" stroke-width="1"/><path d="M0 45.5H45" stroke="#70ad47" stroke-width="1"/></svg>
<svg style="left:653px;top:71px;" width="45" height="46" viewBox="0 0 45 46"><rect x="0.5" y="0.5" width="44" height="45" fill="#fff" stroke="#808080" stroke-width="1"/><path d="M0.5 9.5H44.5" stroke="#808080"/><rect x="2.5" y="11.5" width="40" height="7" fill="#bfbfbf" stroke="#8c8c8c"/><rect x="4" y="14" width="9" height="1.3" fill="#000"/><rect x="16" y="14" width="9" height="1.3" fill="#000"/><rect x="31" y="14" width="9" height="1.3" fill="#000"/><rect x="2.5" y="20.5" width="40" height="7" fill="#fff" stroke="#d0d0d0"/><rect x="4" y="23" width="9" height="1.3" fill="#000"/><rect x="16" y="23" width="9" height="1.3" fill="#000"/><rect x="31" y="23" width="9" height="1.3" fill="#000"/><rect x="2.5" y="29.5" width="40" height="7" fill="#d4d4d4" stroke="#d0d0d0"/><rect x="4" y="32" width="9" height="1.3" fill="#000"/><rect x="16" y="32" width="9" height="1.3" fill="#000"/><rect x="31" y="32" width="9" height="1.3" fill="#000"/><rect x="2.5" y="38.5" width="40" height="7" fill="#fff" stroke="#d8d8d8"/><rect x="4" y="41" width="9" height="1.2" fill="#aaa"/><rect x="16" y="41" width="9" height="1.2" fill="#aaa"/><rect x="31" y="41" width="9" height="1.2" fill="#aaa"/><rect x="4" y="4" width="9" height="1.3" fill="#000"/><rect x="16" y="4" width="9" height="1.3" fill="#000"/><rect x="31" y="4" width="9" height="1.3" fill="#000"/><path d="M0.5 46V0.5H44.5V46" fill="none" stroke="#808080" stroke-width="1"/><path d="M0 45.5H45" stroke="#808080" stroke-width="1"/></svg>
<svg style="left:706px;top:71px;" width="45" height="46" viewBox="0 0 45 46"><rect x="0.5" y="0.5" width="44" height="45" fill="#fff" stroke="#4472c4" stroke-width="1"/><path d="M0.5 9.5H44.5" stroke="#4472c4"/><linearGradient id="g8_11" x1="0" x2="1"><stop offset="0" stop-color="#b4c6e7"/><stop offset="0.55" stop-color="#ffffff" stop-opacity="0.6"/><stop offset="1" stop-color="#b4c6e7"/></linearGradient><rect x="2.5" y="11.5" width="40" height="7" fill="#b4c6e7" stroke="#8c8c8c"/><rect x="3" y="12" width="39" height="6" fill="url(#g8_11)"/><rect x="4" y="14" width="9" height="1.3" fill="#000"/><rect x="16" y="14" width="9" height="1.3" fill="#000"/><rect x="31" y="14" width="9" height="1.3" fill="#000"/><linearGradient id="g8_20" x1="0" x2="1"><stop offset="0" stop-color="#fff"/><stop offset="0.55" stop-color="#ffffff" stop-opacity="0.6"/><stop offset="1" stop-color="#fff"/></linearGradient><rect x="2.5" y="20.5" width="40" height="7" fill="#f2f2f2" stroke="#d0d0d0"/><rect x="3" y="21" width="39" height="6" fill="url(#g8_20)"/><rect x="4" y="23" width="9" height="1.3" fill="#000"/><rect x="16" y="23" width="9" height="1.3" fill="#000"/><rect x="31" y="23" width="9" height="1.3" fill="#000"/><linearGradient id="g8_29" x1="0" x2="1"><stop offset="0" stop-color="#dde6f5"/><stop offset="0.55" stop-color="#ffffff" stop-opacity="0.6"/><stop offset="1" stop-color="#dde6f5"/></linearGradient><rect x="2.5" y="29.5" width="40" height="7" fill="#dde6f5" stroke="#d0d0d0"/><rect x="3" y="30" width="39" height="6" fill="url(#g8_29)"/><rect x="4" y="32" width="9" height="1.2" fill="#888"/><rect x="16" y="32" width="9" height="1.2" fill="#888"/><rect x="31" y="32" width="9" height="1.2" fill="#888"/><linearGradient id="g8_38" x1="0" x2="1"><stop offset="0" stop-color="#fff"/><stop offset="0.55" stop-color="#ffffff" stop-opacity="0.6"/><stop offset="1" stop-color="#fff"/></linearGradient><rect x="2.5" y="38.5" width="40" height="7" fill="#f2f2f2" stroke="#d8d8d8"/><rect x="3" y="39" width="39" height="6" fill="url(#g8_38)"/><rect x="4" y="41" width="9" height="1.2" fill="#888"/><rect x="16" y="41" width="9" height="1.2" fill="#888"/><rect x="31" y="41" width="9" height="1.2" fill="#888"/><rect x="4" y="4" width="9" height="1.3" fill="#000"/><rect x="16" y="4" width="9" height="1.3" fill="#000"/><rect x="31" y="4" width="9" height="1.3" fill="#000"/><path d="M0.5 46V0.5H44.5V46" fill="none" stroke="#4472c4" stroke-width="1"/><path d="M0 45.5H45" stroke="#4472c4" stroke-width="1"/></svg>
<svg style="left:101px;top:176px;" width="9" height="6" viewBox="0 0 9 6"><path d="M0.5 0.5H8.5L4.5 5Z" fill="#666"/></svg>
<svg style="left:131px;top:173px;" width="4" height="12" viewBox="0 0 4 12"><rect x="0.8" y="0.5" width="2" height="2" fill="#777"/><rect x="0.8" y="4.7" width="2" height="2" fill="#777"/><rect x="0.8" y="8.9" width="2" height="2" fill="#777"/></svg>
<svg style="left:160px;top:170px;" width="22" height="20" viewBox="0 0 22 20"><path d="M2.5 2.5L18.5 17.5M18.5 2.5L2.5 17.5" stroke="#8f8f8f" stroke-width="2.2" stroke-linecap="round"/></svg>
<svg style="left:199px;top:170px;" width="24" height="20" viewBox="0 0 24 20"><path d="M2.5 11.5L9 17.5L21 3.5" stroke="#a6a6a6" stroke-width="3.2" fill="none" stroke-linecap="round"/></svg>
<div class="t" style="left:238.80px;top:170px;font-size:20px;line-height:20px;color:#555;font-weight:bold;font-style:italic;font-family:'Liberation Serif',serif;">f</div>
<div class="t" style="left:248.50px;top:174px;font-size:16px;line-height:16px;color:#555;font-weight:bold;font-style:italic;font-family:'Liberation Serif',serif;">x</div>
<svg style="left:773px;top:293px;" width="18" height="17" viewBox="0 0 18 17"><path d="M1 1H12.3V2.5L9 7V11.5H6.8V7L1 2.5Z" fill="#a6a6a6"/><path d="M6.8 11.5H9" stroke="#a6a6a6"/><path d="M8 8.5L15.5 15.5M15.5 8.5L8 15.5" stroke="#a6a6a6" stroke-width="1.2" stroke-linecap="round"/></svg>
<svg style="left:1003px;top:293px;" width="18" height="17" viewBox="0 0 18 17"><path d="M1 1H12.3V2.5L9 7V11.5H6.8V7L1 2.5Z" fill="#a6a6a6"/><path d="M6.8 11.5H9" stroke="#a6a6a6"/><path d="M8 8.5L15.5 15.5M15.5 8.5L8 15.5" stroke="#a6a6a6" stroke-width="1.2" stroke-linecap="round"/></svg>
<svg style="left:1233px;top:293px;" width="18" height="17" viewBox="0 0 18 17"><path d="M1 1H12.3V2.5L9 7V11.5H6.8V7L1 2.5Z" fill="#a6a6a6"/><path d="M6.8 11.5H9" stroke="#a6a6a6"/><path d="M8 8.5L15.5 15.5M15.5 8.5L8 15.5" stroke="#a6a6a6" stroke-width="1.2" stroke-linecap="round"/></svg>
<div style="left:588px;top:285px;width:218px;height:291px;border:1px solid #ababab;box-sizing:border-box"></div>
<div style="left:591px;top:288px;width:212px;height:285px;border:1px solid #d0d0d0;box-sizing:border-box"></div>
<div style="left:585px;top:282px;width:10px;height:10px;background:#fff;border:1px solid #b0b0b0;border-radius:2px;box-sizing:border-box"></div>
<div style="left:585px;top:425px;width:10px;height:10px;background:#fff;border:1px solid #b0b0b0;border-radius:2px;box-sizing:border-box"></div>
<div style="left:585px;top:569px;width:10px;height:10px;background:#fff;border:1px solid #b0b0b0;border-radius:2px;box-sizing:border-box"></div>
<div style="left:692px;top:282px;width:10px;height:10px;background:#fff;border:1px solid #b0b0b0;border-radius:2px;box-sizing:border-box"></div>
<div style="left:692px;top:569px;width:10px;height:10px;background:#fff;border:1px solid #b0b0b0;border-radius:2px;box-sizing:border-box"></div>
<div style="left:799px;top:282px;width:10px;height:10px;background:#fff;border:1px solid #b0b0b0;border-radius:2px;box-sizing:border-box"></div>
<div style="left:799px;top:425px;width:10px;height:10px;background:#fff;border:1px solid #b0b0b0;border-radius:2px;box-sizing:border-box"></div>
<div style="left:799px;top:569px;width:10px;height:10px;background:#fff;border:1px solid #b0b0b0;border-radius:2px;box-sizing:border-box"></div>
<svg style="left:0;top:0;filter:drop-shadow(0px 3px 2.5px rgba(0,0,0,0.42))" width="1275" height="591"><g transform="translate(428,124.7) rotate(35.7)"><path d="M0 0L29.7 -14.5V-5H265.3A5 5 0 0 1 265.3 5H29.7V14.5Z" fill="#ff0000"/></g></svg>
</body></html>
